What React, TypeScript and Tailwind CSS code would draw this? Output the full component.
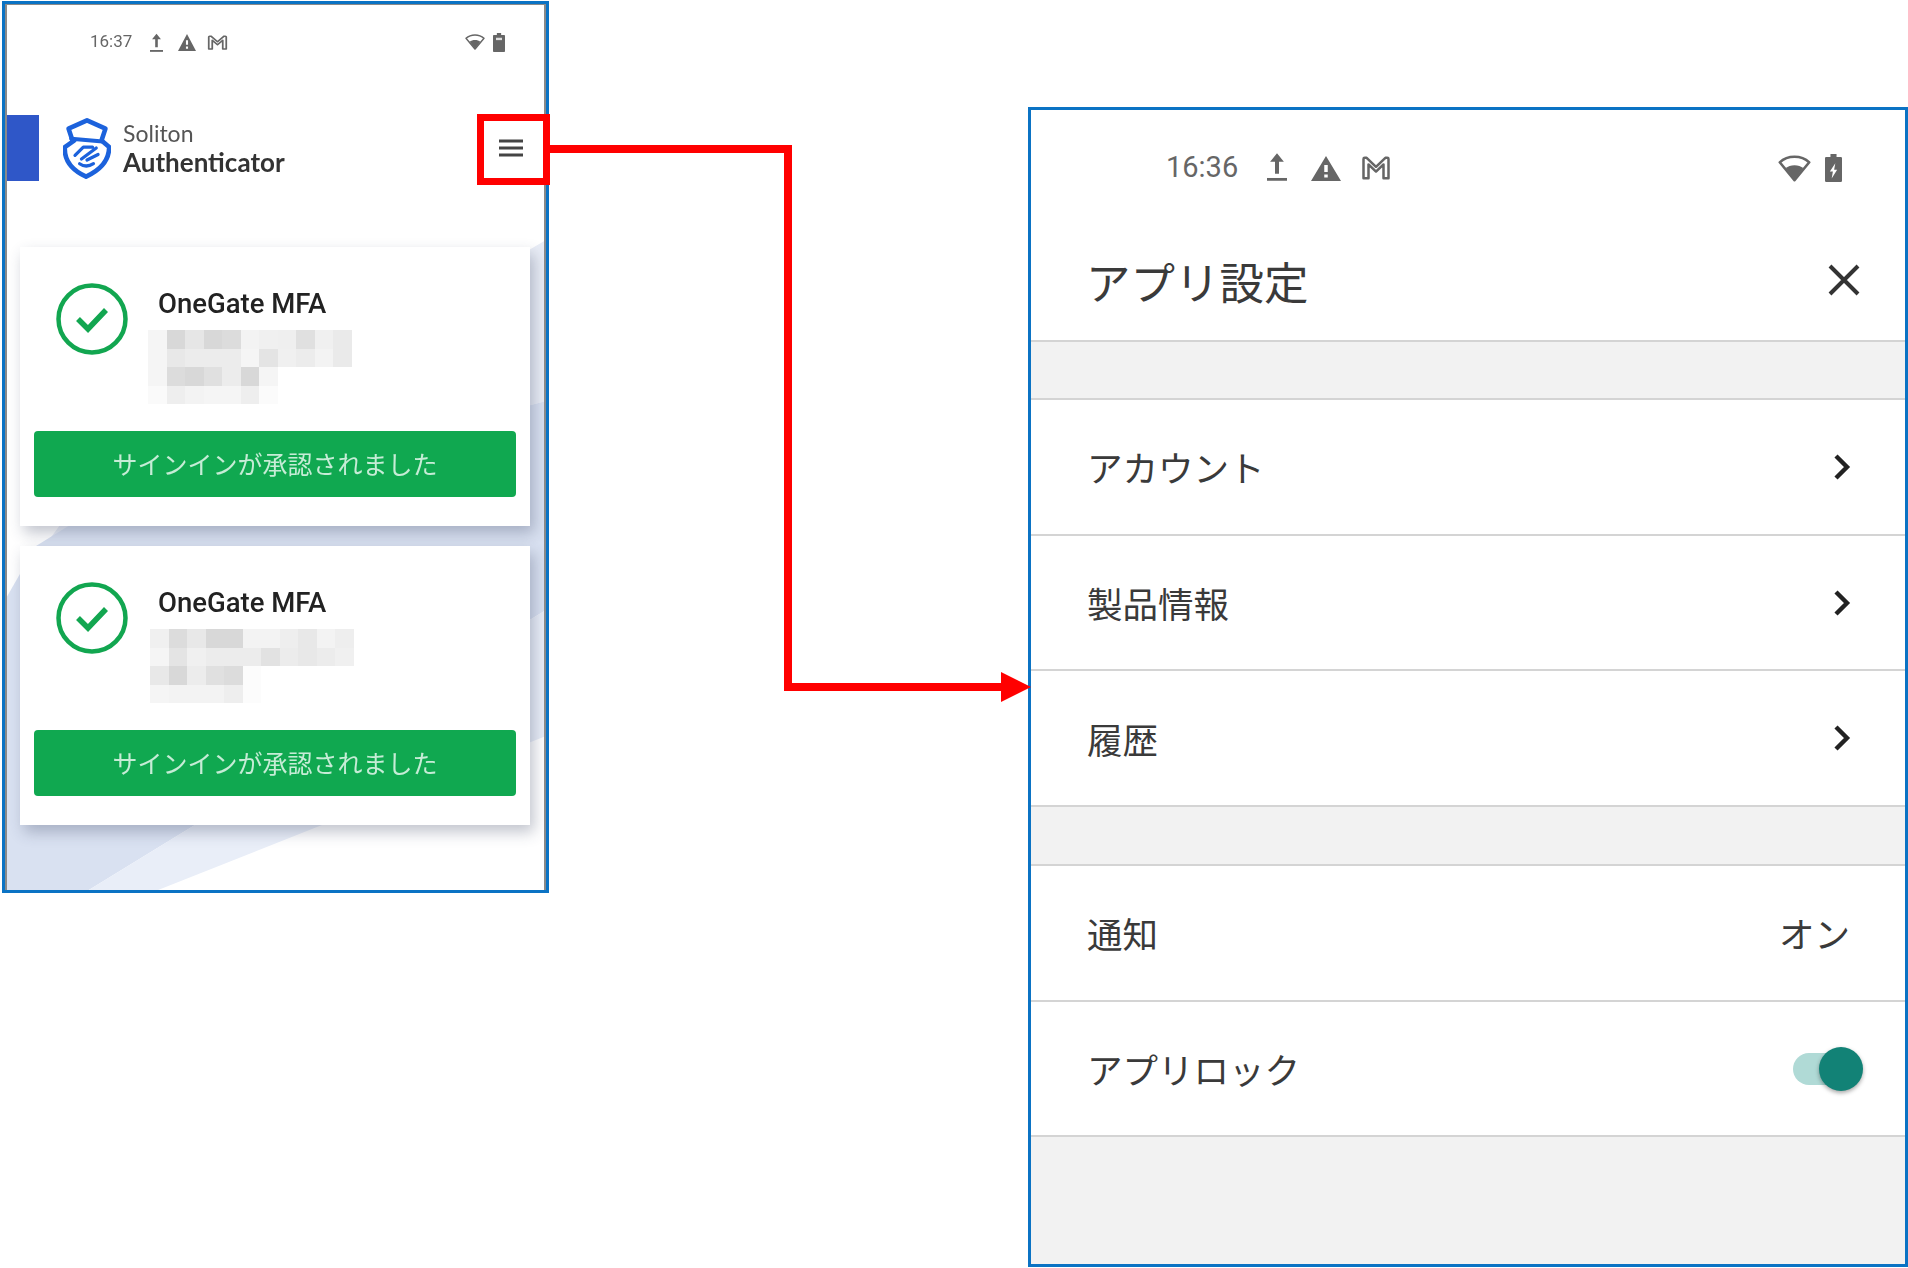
const CJK = "font-['Noto_Sans_CJK_JP','Noto_Sans',sans-serif]"

const PIXELS_A = [
  ['#f5f5f5', '#d8d8d8', '#e6e6e6', '#d8d8d8', '#dcdcdc', '#f3f3f3', '#f0f0f0', '#efefef', '#e0e0e0', '#f0f0f0', '#eaeaea'],
  ['#f5f5f5', '#e8e8e8', '#ececec', '#ececec', '#ececec', '#f5f5f5', '#e4e4e4', '#f0f0f0', '#ececec', '#f3f3f3', '#eaeaea'],
  ['#f5f5f5', '#dcdcdc', '#d8d8d8', '#e0e0e0', '#ececec', '#d8d8d8', '#f5f5f5'],
  ['#fafafa', '#eeeeee', '#f3f3f3', '#f5f5f5', '#f5f5f5', '#eeeeee', '#fbfbfb'],
]

const PIXELS_B = [
  ['#f0f0f0', '#dcdcdc', '#e8e8e8', '#d8d8d8', '#d8d8d8', '#f3f3f3', '#f3f3f3', '#eeeeee', '#e8e8e8', '#f3f3f3', '#eeeeee'],
  ['#f5f5f5', '#e4e4e4', '#f0f0f0', '#ececec', '#ececec', '#ececec', '#e2e2e2', '#ececec', '#e8e8e8', '#ececec', '#f0f0f0'],
  ['#e8e8e8', '#d8d8d8', '#ececec', '#e0e0e0', '#dcdcdc', '#fcfcfc'],
  ['#f5f5f5', '#f3f3f3', '#f3f3f3', '#f3f3f3', '#eeeeee', '#fcfcfc'],
]

function Pixels({ rows, className }: { rows: string[][]; className: string }) {
  return (
    <div className={`flex flex-col ${className}`}>
      {rows.map((row, i) => (
        <div key={i} className="flex">
          {row.map((c, j) => (
            <div key={j} className="w-[18.5px] h-[18.5px]" style={{ background: c }} />
          ))}
        </div>
      ))}
    </div>
  )
}

function UploadIcon({ className }: { className: string }) {
  return (
    <svg viewBox="0 0 16 24" className={className} preserveAspectRatio="none">
      <path d="M6.400 18V8H2.500L8 1l5.500 7H9.600v10z" fill="#666" />
      <rect x="0" y="21.500" width="16" height="2.300" fill="#666" />
    </svg>
  )
}

function WarnIcon({ className }: { className: string }) {
  return (
    <svg viewBox="0 0 24 22" className={className} preserveAspectRatio="none">
      <path d="M0 22h24L12 0 0 22zm13.400-3h-2.800v-2.800h2.800V19zm0-5h-2.800V8h2.800v6z" fill="#666" />
    </svg>
  )
}

function MailIcon({ className }: { className: string }) {
  return (
    <svg viewBox="0 0 24 20" className={className} preserveAspectRatio="none">
      <path d="M2 18.500V2.500q0-1 1-1h1.500L12 9l7.500-7.500H21q1 0 1 1v16h-4V7l-6 6-6-6v11.500z" fill="none" stroke="#666" strokeWidth="2" strokeLinejoin="round" />
    </svg>
  )
}

function WifiIcon({ className }: { className: string }) {
  return (
    <svg viewBox="0 0 28 24" className={className} preserveAspectRatio="none">
      <path d="M14 1.500C9 1.500 4.500 3.500 1.500 6.500L14 22.500 26.500 6.500C23.500 3.500 19 1.500 14 1.500z" fill="none" stroke="#666" strokeWidth="2.200" strokeLinejoin="round" />
      <path d="M6.500 11.500C8.500 10 11 9 14 9s5.500 1 7.500 2.500L14 22z" fill="#666" />
    </svg>
  )
}

function BatteryIcon({ className, bolt }: { className: string; bolt?: boolean }) {
  return (
    <svg viewBox="0 0 14 24" className={className} preserveAspectRatio="none">
      <path d="M4.500 0h5v2.500H13q1 0 1 1V23q0 1-1 1H1q-1 0-1-1V3.500q0-1 1-1h3.500z" fill="#666" />
      {bolt ? (
        <path d="M8.500 8L4 15h2.500L5.500 21 10 13.500H7.500z" fill="#fff" />
      ) : (
        <rect x="3.500" y="6" width="7" height="3" fill="#ddd" />
      )}
    </svg>
  )
}

function ShieldLogo() {
  return (
    <svg viewBox="0 0 52 66" className="w-[48px] h-[66px] ml-[24px] shrink-0">
      <g fill="none" stroke="#1c62dc" strokeLinejoin="round" strokeLinecap="round">
        <path d="M10 24L6 12 26 3l20 9-4 12" strokeWidth="5" />
        <path d="M9 23l34 3" strokeWidth="4.500" />
        <path d="M43 26l7 6c0 16-12 26-25 32C12 58 1 48 2 32l10-7" strokeWidth="5" />
        <path d="M13 41l9-9h10M36 33L20 45M26 46l12-6M18 50q7 5 15 0" strokeWidth="3.500" />
      </g>
    </svg>
  )
}

function ApprovalCard({ pixels, pixelClass }: { pixels: string[][]; pixelClass: string }) {
  return (
    <div className="relative bg-white h-[279px] flex flex-col shadow-[4px_7px_14px_rgba(50,60,90,0.3)]">
      <div className="flex h-[184px]">
        <svg viewBox="0 0 72 72" className="w-[72px] h-[72px] ml-[36px] mt-[36px] shrink-0">
          <circle cx="36" cy="36" r="33.500" fill="none" stroke="#12a650" strokeWidth="4.500" />
          <path d="M22 36l10 10 18-19" fill="none" stroke="#12a650" strokeWidth="5.500" />
        </svg>
        <div className="flex flex-col">
          <div className="ml-[30px] mt-[40px] h-[34px] text-[27.500px] leading-[34px] font-medium text-[#222] font-['Roboto',sans-serif] whitespace-nowrap">
            OneGate MFA
          </div>
          <Pixels rows={pixels} className={pixelClass} />
        </div>
      </div>
      <div className={`mx-[14px] h-[66px] rounded-[4px] bg-[#10a850] flex items-center justify-center text-[25px] text-[#c6ecd6] ${CJK}`}>
        サインインが承認されました
      </div>
    </div>
  )
}

function PhoneHome() {
  return (
    <div className="relative w-[547px] h-[892px] border-[3px] border-[#0b73c4] overflow-hidden bg-white">
      {/* background swoosh behind the cards, in page coordinates */}
      <svg viewBox="5 4 541 886" className="absolute inset-0 w-full h-full">
        <polygon points="5,600 70,525 546,401 546,240 60,525" fill="#e9edf6" />
        <polygon points="5,600 36,546 70,525 546,401 546,610 79,896 5,896" fill="#d9e1f1" />
        <polygon points="546,610 79,896 143,896 546,736" fill="#e9eef8" />
      </svg>
      <div className="relative flex flex-col blur-[0.6px]">
        <div className="flex items-center h-[76px] mb-[2px] pl-[85px] pr-[41px] font-['Roboto',sans-serif]">
          <span className="text-[17px] text-[#666] w-[60px]">16:37</span>
          <UploadIcon className="w-[13px] h-[19px]" />
          <WarnIcon className="w-[18px] h-[17px] ml-[15px]" />
          <MailIcon className="w-[21px] h-[15px] ml-[11px]" />
          <WifiIcon className="w-[20px] h-[16px] ml-auto" />
          <BatteryIcon className="w-[12px] h-[19px] ml-[8px]" />
        </div>
        <div className="flex items-center h-[66px] mt-[33px]">
          <div className="w-[34px] h-[66px] bg-[#2f57c8] shrink-0" />
          <ShieldLogo />
          <div className="flex flex-col ml-[12px] font-['Lato',sans-serif]">
            <span className="text-[23px] leading-[27px] text-[#555]">Soliton</span>
            <span className="text-[26px] leading-[30px] font-bold text-[#333]">Authenticator</span>
          </div>
          <svg viewBox="0 0 24 18" className="w-[24px] h-[18px] ml-auto mr-[23px]">
            <path d="M0 2h24M0 9h24M0 16h24" stroke="#444" strokeWidth="2.800" />
          </svg>
        </div>
        <div className="flex flex-col gap-[20px] mt-[66px] mx-[15px] w-[510px]">
          <ApprovalCard pixels={PIXELS_A} pixelClass="ml-[20px] mt-[9px]" />
          <ApprovalCard pixels={PIXELS_B} pixelClass="ml-[22px] mt-[9px]" />
        </div>
      </div>
      <div className="absolute inset-0 border-x-[2px] border-t-[1px] border-[#8a8a8a] pointer-events-none" />
    </div>
  )
}

function Row({ label, children }: { label: string; children: React.ReactNode }) {
  return (
    <div className="h-[135.7px] border-b-2 border-[#d4d4d4] bg-white flex items-center pl-[56px] pr-[55px]">
      <span className="text-[35.500px] text-[#3a3a3a]">{label}</span>
      <div className="ml-auto flex items-center">{children}</div>
    </div>
  )
}

function Chevron() {
  return (
    <svg viewBox="0 0 18 26" className="w-[18px] h-[26px] -mr-[1px]">
      <path d="M3 2l11 11L3 24" fill="none" stroke="#222" strokeWidth="4.400" />
    </svg>
  )
}

function SettingsPanel() {
  return (
    <div className={`w-[880px] h-[1160px] border-[3px] border-[#0b73c4] bg-[#f2f2f2] flex flex-col ${CJK}`}>
      <div className="h-[232px] bg-white border-b-2 border-[#d4d4d4] flex flex-col">
        <div className="flex items-center h-[116px] pl-[135px] pr-[63px] font-['Roboto',sans-serif]">
          <span className="text-[29px] text-[#666] w-[101px]">16:36</span>
          <UploadIcon className="w-[20px] h-[29px] -mt-[3px]" />
          <WarnIcon className="w-[30px] h-[25px] ml-[24px]" />
          <MailIcon className="w-[30px] h-[24px] ml-[20px]" />
          <WifiIcon className="w-[33px] h-[27px] ml-auto" />
          <BatteryIcon bolt className="w-[17px] h-[28px] ml-[14px]" />
        </div>
        <div className="flex items-center pl-[55px] pr-[45px] h-[110px]">
          <span className="text-[44.500px] text-[#3a3a3a]">アプリ設定</span>
          <svg viewBox="0 0 32 32" className="w-[32px] h-[32px] ml-auto -mt-[3px]">
            <path d="M2 2l28 28M30 2L2 30" stroke="#333" strokeWidth="4" />
          </svg>
        </div>
      </div>
      <div className="h-[58px] border-b-2 border-[#d4d4d4]" />
      <Row label="アカウント"><Chevron /></Row>
      <Row label="製品情報"><Chevron /></Row>
      <Row label="履歴"><Chevron /></Row>
      <div className="h-[59px] border-b-2 border-[#d4d4d4]" />
      <Row label="通知"><span className="text-[35.500px] text-[#3a3a3a]">オン</span></Row>
      <Row label="アプリロック">
        <div className="relative w-[70px] h-[32px] -mr-[13px]">
          <div className="absolute left-0 top-0 w-[56px] h-[32px] rounded-full bg-[#b0dad6]" />
          <div className="absolute right-0 -top-[6px] w-[44px] h-[44px] rounded-full bg-[#128276] shadow-[0_2px_4px_rgba(0,0,0,0.35)]" />
        </div>
      </Row>
    </div>
  )
}

export default function App() {
  return (
    <div className="relative w-[1908px] h-[1268px] bg-white overflow-hidden">
      <div className="flex items-start pl-[2px] pt-[1px]">
        <PhoneHome />
        <div className="ml-[479px] mt-[106px]">
          <SettingsPanel />
        </div>
      </div>
      {/* red callout from the menu button to the panel */}
      <div className="absolute left-[477px] top-[114px] w-[73px] h-[71px] border-[7px] border-[#ff0000]" />
      <svg viewBox="0 0 1908 1268" className="absolute inset-0 w-[1908px] h-[1268px] pointer-events-none">
        <path d="M550 149H788V687H1004" fill="none" stroke="#ff0000" strokeWidth="8" />
        <polygon points="1001,672 1031,687 1001,702" fill="#ff0000" />
      </svg>
    </div>
  )
}
